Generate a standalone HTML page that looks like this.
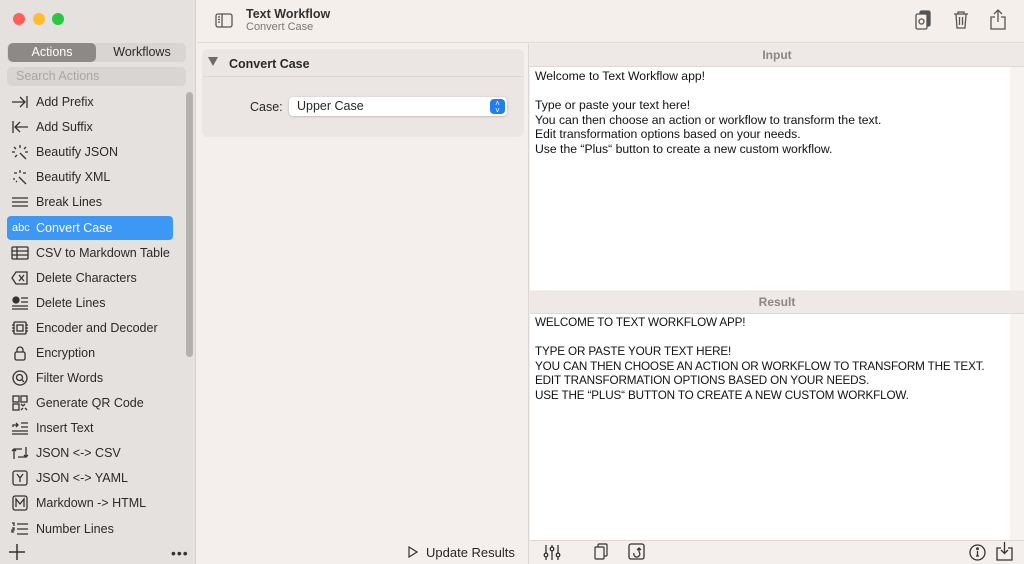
<!DOCTYPE html>
<html><head><meta charset="utf-8"><style>
*{margin:0;padding:0;box-sizing:border-box}
body{width:1024px;height:564px;overflow:hidden;font-family:"Liberation Sans",sans-serif;font-size:12px;color:#262626;background:#f4efec;position:relative}
.abs{position:absolute}
#side{left:0;top:0;width:196px;height:564px;background:#e5e1de;border-right:1px solid #d6d1ce}
.dot{width:12px;height:12px;border-radius:50%;top:13px}
.seg{left:7px;top:43px;width:179px;height:19px;background:#d9d5d2;border-radius:5px}
.seg div{position:absolute;top:0;height:19px;line-height:19px;text-align:center;font-size:12.5px}
.item{position:absolute;left:7px;width:166px;height:24px;line-height:24px;font-size:12.5px;color:#2a2a2a}
.item svg{position:absolute;left:4px;top:4px}
.item span{position:absolute;left:29px}
.sel{background:#3d97f5;border-radius:4px;color:#fff}
.sel b{position:absolute;left:5px;font-weight:normal;font-size:11px;color:#fff}
#tb{left:197px;top:0;width:827px;height:43px;background:#f5efeb;border-bottom:1px solid #dfd9d6}
#mid{left:197px;top:44px;width:332px;height:520px;background:#f4efec;border-right:1px solid #dcd6d3}
.hdr{left:530px;width:494px;height:23px;background:#eee9e6;text-align:center;line-height:22px;color:#8a8683;font-weight:bold;font-size:12px;border-bottom:1px solid #dfd9d6}
.txt{left:530px;width:480px;background:#fff;padding:2px 5px;font-size:12.2px;line-height:14.5px;color:#111;white-space:nowrap}
.up{font-size:11.7px;letter-spacing:-0.15px}
</style></head><body>
<div id="side" class="abs">
 <div class="abs dot" style="left:13px;background:#fe5f57"></div>
 <div class="abs dot" style="left:33px;background:#febc2e"></div>
 <div class="abs dot" style="left:52px;background:#28c840"></div>
 <div class="abs seg"><div style="left:1px;width:88px;background:#8d8986;border-radius:5px;color:#fff">Actions</div><div style="left:92px;width:86px;color:#2a2a2a">Workflows</div></div>
 <div class="abs" style="left:7px;top:67px;width:179px;height:19px;background:#d9d5d2;border-radius:5px;line-height:19px;padding-left:9px;color:#a9a5a2;font-size:12.5px">Search Actions</div>
 <div class="abs" style="left:186px;top:92px;width:7px;height:265px;background:#b5b1ae;border-radius:4px"></div>
 <div class="item" style="top:90px"><svg width="18" height="16" fill="none" stroke="#333" stroke-width="1.3"><path d="M1 8h12M9 3l5 5-5 5M16 2v12"/></svg><span>Add Prefix</span></div>
 <div class="item" style="top:115px"><svg width="18" height="16" fill="none" stroke="#333" stroke-width="1.3"><path d="M17 8H5M9 3L4 8l5 5M2 2v12"/></svg><span>Add Suffix</span></div>
 <div class="item" style="top:140px"><svg width="18" height="16" fill="none" stroke="#333" stroke-width="1.3"><path d="M9 1v3M3 3l2 2M15 3l-2 2M1 8h3M14 8h3M4 13l2-2M9 9l6 6"/></svg><span>Beautify JSON</span></div>
 <div class="item" style="top:165px"><svg width="18" height="16" fill="none" stroke="#333" stroke-width="1.3"><path d="M9 1v3M3 4h3M12 4h3M2 10h2M8 8l7 7M5 13l1-1"/></svg><span>Beautify XML</span></div>
 <div class="item" style="top:190px"><svg width="18" height="16" fill="none" stroke="#333" stroke-width="1.3"><path d="M1 4h16M1 8h16M1 12h16"/></svg><span>Break Lines</span></div>
 <div class="item sel" style="top:216px"><b>abc</b><span>Convert Case</span></div>
 <div class="item" style="top:241px"><svg width="18" height="16" fill="none" stroke="#333" stroke-width="1.3"><rect x="1" y="2" width="16" height="12" rx="1"/><path d="M1 6h16M1 10h16M6 2v12"/></svg><span>CSV to Markdown Table</span></div>
 <div class="item" style="top:266px"><svg width="18" height="16" fill="none" stroke="#333" stroke-width="1.3"><path d="M5 2h11v12H5L1 8z M8 5l5 6M13 5l-5 6"/></svg><span>Delete Characters</span></div>
 <div class="item" style="top:291px"><svg width="18" height="16" fill="none" stroke="#333" stroke-width="1.3"><circle cx="5" cy="5" r="3" fill="#333"/><path d="M10 3h7M10 7h7M1 11h16M1 14h16"/></svg><span>Delete Lines</span></div>
 <div class="item" style="top:316px"><svg width="18" height="16" fill="none" stroke="#333" stroke-width="1.3"><rect x="3" y="2" width="12" height="12" rx="1"/><rect x="6" y="5" width="6" height="6"/><path d="M1 5h2M1 8h2M1 11h2M15 5h2M15 8h2M15 11h2"/></svg><span>Encoder and Decoder</span></div>
 <div class="item" style="top:341px"><svg width="18" height="16" fill="none" stroke="#333" stroke-width="1.3"><rect x="4" y="7" width="10" height="8" rx="1.5"/><path d="M6 7V5a3 3 0 0 1 6 0v2"/></svg><span>Encryption</span></div>
 <div class="item" style="top:366px"><svg width="18" height="16" fill="none" stroke="#333" stroke-width="1.3"><circle cx="9" cy="8" r="7"/><circle cx="8.5" cy="7.5" r="3"/><path d="M10.5 9.5l2.5 2.5"/></svg><span>Filter Words</span></div>
 <div class="item" style="top:391px"><svg width="18" height="16" fill="none" stroke="#333" stroke-width="1.3"><rect x="2" y="1" width="6" height="6"/><rect x="10" y="1" width="6" height="6"/><rect x="2" y="9" width="6" height="6"/><path d="M10 9l2 2M14 9l-2 2M10 15l2-2M16 15l-2-2"/></svg><span>Generate QR Code</span></div>
 <div class="item" style="top:416px"><svg width="18" height="16" fill="none" stroke="#333" stroke-width="1.3"><path d="M2 7V5h5M5 3l2 2-2 2M10 3h7M10 7h7M1 11h16M1 14h16"/></svg><span>Insert Text</span></div>
 <div class="item" style="top:441px"><svg width="18" height="16" fill="none" stroke="#333" stroke-width="1.3"><path d="M3 14V4h8M1 6l2-2 2 2M15 2v10H7M13 10l2 2 2-2"/></svg><span>JSON &lt;-&gt; CSV</span></div>
 <div class="item" style="top:466px"><svg width="18" height="16" fill="none" stroke="#333" stroke-width="1.3"><rect x="2" y="1" width="14" height="14" rx="2"/><path d="M6 4l3 4 3-4M9 8v4"/></svg><span>JSON &lt;-&gt; YAML</span></div>
 <div class="item" style="top:491px"><svg width="18" height="16" fill="none" stroke="#333" stroke-width="1.3"><rect x="2" y="1" width="14" height="14" rx="2"/><path d="M5 12V4l4 5 4-5v8"/></svg><span>Markdown -&gt; HTML</span></div>
 <div class="item" style="top:517px"><svg width="18" height="16" fill="none" stroke="#333" stroke-width="1.3"><path d="M6 3h11M6 8h11M6 13h11M1 2h2v3M1 7h2v2H1v2h2"/></svg><span>Number Lines</span></div>
 <svg class="abs" style="left:8px;top:543px" width="18" height="18" fill="none" stroke="#333" stroke-width="1.5"><path d="M9 1v16M1 9h16"/></svg>
 <div class="abs" style="left:171px;top:545px;font-size:14px;letter-spacing:1px;color:#333">•••</div>
</div>
<div id="tb" class="abs">
 <svg class="abs" style="left:18px;top:13px" width="18" height="15" fill="none" stroke="#555" stroke-width="1.3"><rect x="1" y="1" width="16" height="13" rx="2"/><path d="M7 1v13M3 4h2M3 6.5h2M3 9h2"/></svg>
 <div class="abs" style="left:49px;top:7px;font-weight:bold;font-size:12.5px;color:#333">Text Workflow</div>
 <div class="abs" style="left:49px;top:21px;font-size:11px;color:#777">Convert Case</div>
 <svg class="abs" style="left:717px;top:10px" width="18" height="20" fill="none" stroke="#555" stroke-width="1.3"><rect x="6" y="1" width="10" height="15" rx="1.5" fill="#555"/><rect x="2" y="4" width="11" height="15" rx="1.5" fill="#f5efeb"/><circle cx="7.5" cy="11.5" r="2.5"/></svg>
 <svg class="abs" style="left:756px;top:10px" width="16" height="19" fill="none" stroke="#555" stroke-width="1.3"><path d="M1 4h14M5 4V2h6v2M3 4l1 14h8l1-14M6.5 7v8M9.5 7v8"/></svg>
 <svg class="abs" style="left:792px;top:9px" width="18" height="21" fill="none" stroke="#555" stroke-width="1.3"><path d="M6 8H2v12h14V8h-4M9 1v12M5 5l4-4 4 4"/></svg>
</div>
<div id="mid" class="abs">
 <div class="abs" style="left:5px;top:5px;width:322px;height:88px;background:#ebe6e3;border-radius:6px"></div>
 <div class="abs" style="left:5px;top:5px;width:322px;height:28px;border-bottom:1px solid #ddd7d4"></div>
 <div class="abs" style="left:11px;top:13px;width:0;height:0;border-left:5px solid transparent;border-right:5px solid transparent;border-top:9px solid #6e6a67"></div>
 <div class="abs" style="left:32px;top:13px;font-weight:bold;font-size:12.5px;color:#2a2a2a">Convert Case</div>
 <div class="abs" style="left:53px;top:56px;font-size:12.5px">Case:</div>
 <div class="abs" style="left:92px;top:53px;width:218px;height:19px;background:#fff;border-radius:4px;box-shadow:0 0.5px 2px rgba(0,0,0,.25);line-height:19px;padding-left:8px;font-size:12.5px">Upper Case</div>
 <div class="abs" style="left:293px;top:55px;width:15px;height:15px;background:#1f7ff0;border-radius:4px;color:#fff;font-size:8px;line-height:7px;text-align:center;padding-top:1px">˄<br>˅</div>
 <svg class="abs" style="left:211px;top:502px" width="10" height="12" fill="none" stroke="#333" stroke-width="1.2"><path d="M1 1l8 5-8 5z"/></svg>
 <div class="abs" style="left:229px;top:501px;font-size:13px">Update Results</div>
</div>
<div class="abs hdr" style="top:44px">Input</div>
<div class="abs txt" style="top:67px;height:223px">Welcome to Text Workflow app!<br><br>Type or paste your text here!<br>You can then choose an action or workflow to transform the text.<br>Edit transformation options based on your needs.<br>Use the “Plus“ button to create a new custom workflow.</div>
<div class="abs" style="left:1010px;top:67px;width:14px;height:223px;background:#f6f3f1"></div>
<div class="abs hdr" style="top:291px">Result</div>
<div class="abs txt up" style="top:314px;height:226px">WELCOME TO TEXT WORKFLOW APP!<br><br>TYPE OR PASTE YOUR TEXT HERE!<br>YOU CAN THEN CHOOSE AN ACTION OR WORKFLOW TO TRANSFORM THE TEXT.<br>EDIT TRANSFORMATION OPTIONS BASED ON YOUR NEEDS.<br>USE THE “PLUS“ BUTTON TO CREATE A NEW CUSTOM WORKFLOW.</div>
<div class="abs" style="left:1010px;top:314px;width:14px;height:226px;background:#f6f3f1"></div>
<div class="abs" style="left:530px;top:540px;width:494px;height:24px;background:#f4efec;border-top:1px solid #ddd7d4"></div>
<svg class="abs" style="left:543px;top:544px" width="18" height="17" fill="none" stroke="#333" stroke-width="1.3"><path d="M3 1v15M9 1v15M15 1v15"/><circle cx="3" cy="11" r="1.8" fill="#f4efec"/><circle cx="9" cy="5" r="1.8" fill="#f4efec"/><circle cx="15" cy="11" r="1.8" fill="#f4efec"/></svg>
<svg class="abs" style="left:593px;top:543px" width="16" height="18" fill="none" stroke="#333" stroke-width="1.2"><rect x="5" y="1" width="9" height="12" rx="1"/><rect x="2" y="4" width="9" height="12" rx="1" fill="#f4efec"/></svg>
<svg class="abs" style="left:628px;top:543px" width="18" height="18" fill="none" stroke="#333" stroke-width="1.3"><rect x="1" y="1" width="15" height="15" rx="2"/><path d="M11 5v4M9 7l2-2 2 2M11 9a3 3 0 1 1-5 1"/></svg>
<svg class="abs" style="left:969px;top:544px" width="17" height="17" fill="none" stroke="#333" stroke-width="1.3"><circle cx="8.5" cy="8.5" r="7.5"/><path d="M8.5 7v5M7 12h3"/><circle cx="8.5" cy="4.7" r=".8" fill="#333"/></svg>
<svg class="abs" style="left:996px;top:541px" width="17" height="20" fill="none" stroke="#333" stroke-width="1.3"><path d="M5 7H1v12h15V7h-4M8.5 1v11M5 9l3.5 3.5L12 9"/></svg>
</body></html>
